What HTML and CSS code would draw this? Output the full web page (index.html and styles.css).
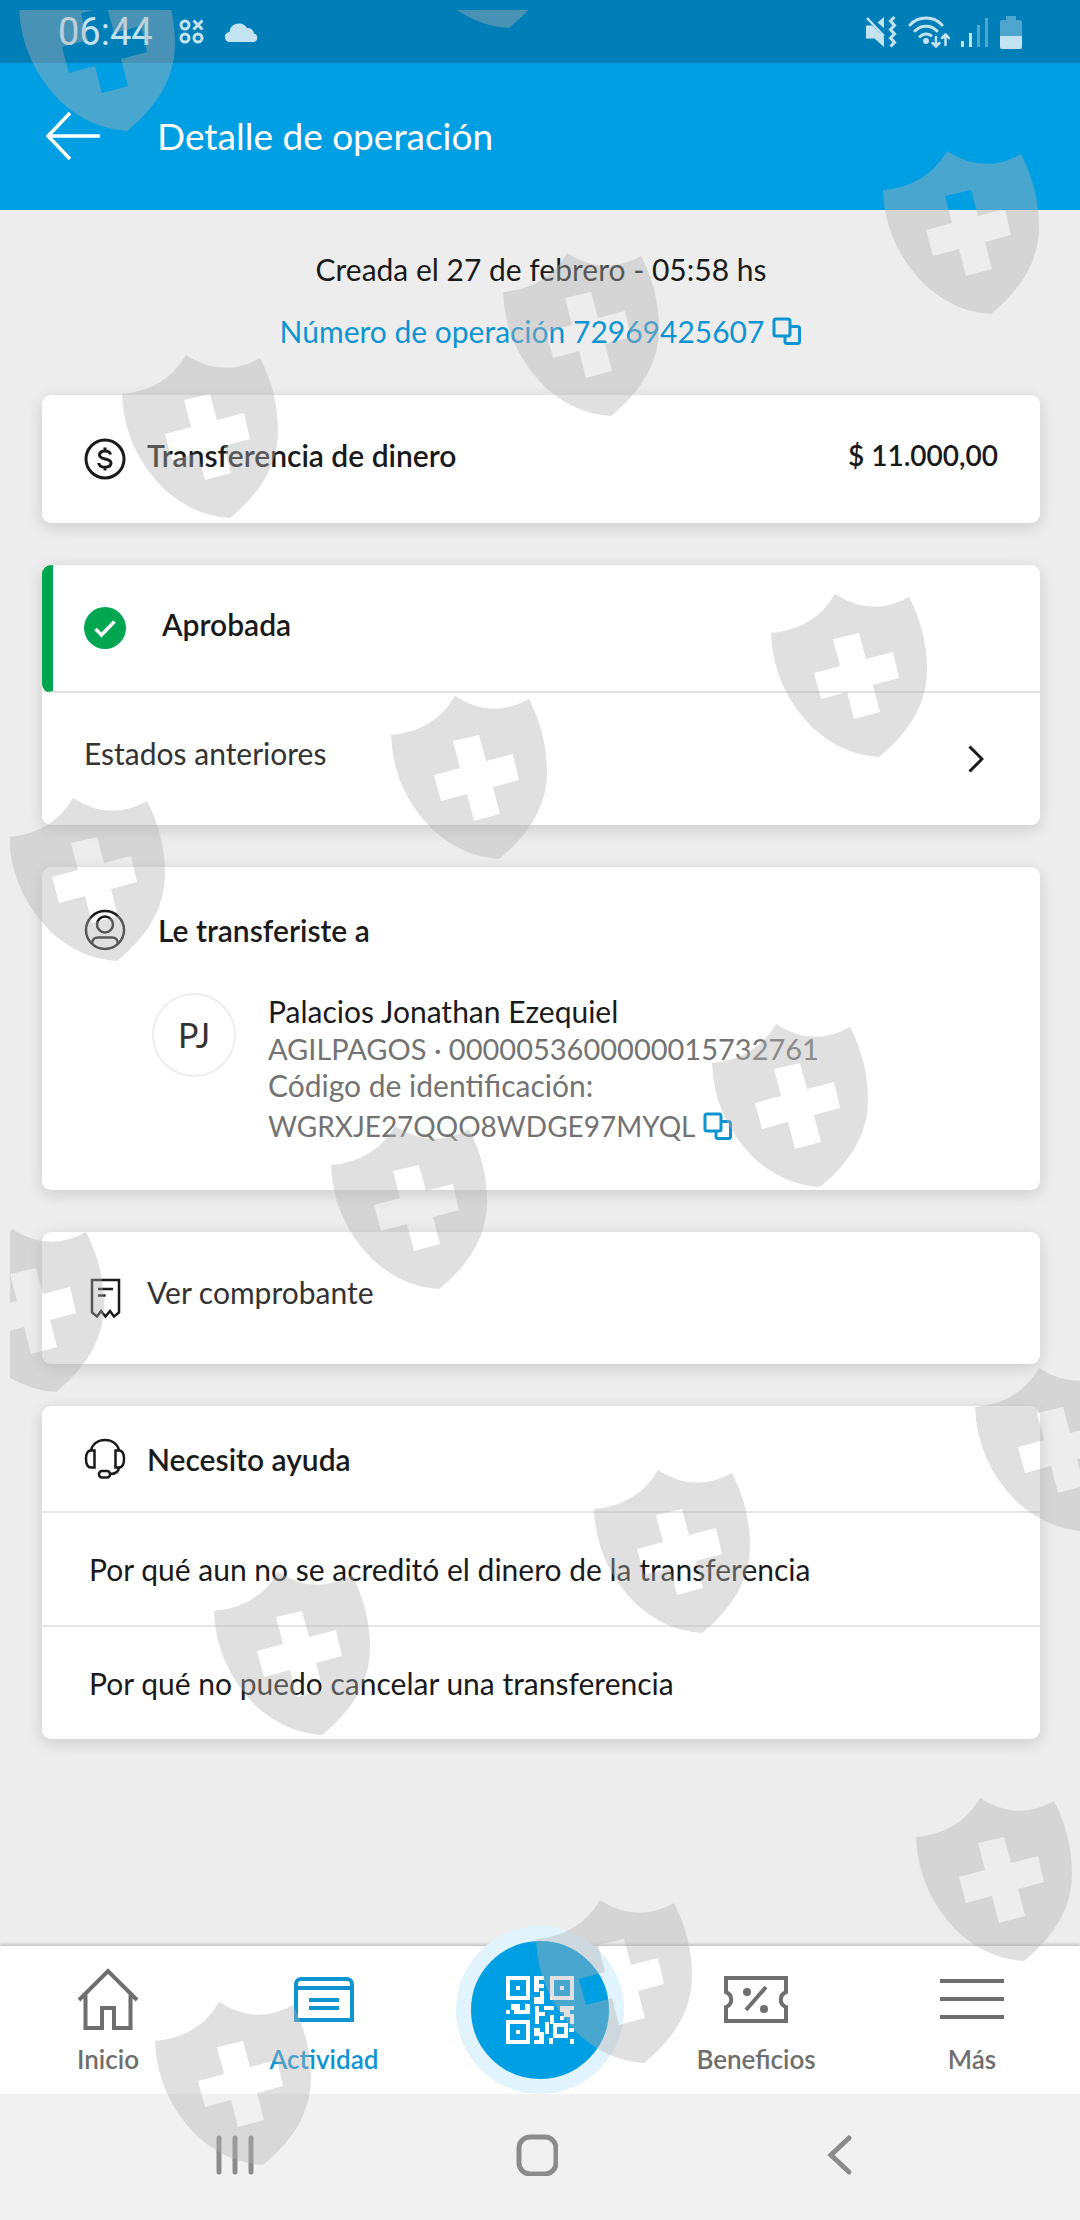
FILE: index.html
```html
<!DOCTYPE html>
<html lang="es">
<head>
    <meta charset="UTF-8">
    <meta name="viewport" content="width=device-width, initial-scale=1.0">
    <title>Detalle de operación</title>
    <link rel="stylesheet" href="styles.css">
</head>
<body>
    <!-- Phone status bar -->
    <div class="status-bar">
        <span class="status-time">06:44</span>
        <svg class="status-apps" width="26" height="26" viewBox="0 0 26 26" fill="none" stroke="currentColor" stroke-width="3">
            <circle cx="6" cy="6" r="4"/>
            <circle cx="6" cy="19" r="4"/>
            <circle cx="19" cy="19" r="4"/>
            <path d="M14.500 1.500l9 9M23.500 1.500l-9 9"/>
        </svg>
        <svg class="status-cloud" width="34" height="20" viewBox="0 0 34 20" fill="currentColor">
            <path d="M5 20a5 5 0 0 1-.5-10A9.500 9.500 0 0 1 22 6a6.500 6.500 0 0 1 7 5.500A4.500 4.500 0 0 1 29.500 20z"/>
        </svg>
        <div class="status-right">
            <svg width="32" height="34" viewBox="0 0 32 34" fill="currentColor">
                <path d="M1 10.500h6L19 22v10L9.500 23.500H1zM12.500 7.500L19 2v11z"/>
                <path d="M2 3l17 18" stroke="currentColor" stroke-width="2.500"/>
                <path d="M29.500 2l-4 4 4 4.500-4 4 4 4.500-4 4 4 4.500-4 4" fill="none" stroke="currentColor" stroke-width="3"/>
            </svg>
            <svg width="42" height="34" viewBox="0 0 42 34" fill="none" stroke="currentColor" stroke-width="3" stroke-linecap="round">
                <path d="M2 10a22 22 0 0 1 32 0M7 16a15 15 0 0 1 22 0M12 21.500a8.500 8.500 0 0 1 11-1"/>
                <circle cx="18" cy="26" r="1.500" fill="currentColor"/>
                <path d="M28 22v9M24.500 28l3.500 3.500 3.500-3.500M37.500 30V20M34 23l3.500-3.500L41 23" stroke-width="2.500"/>
            </svg>
            <svg width="28" height="34" viewBox="0 0 28 34" fill="currentColor">
                <path d="M0 26h3v6H0zM8 18h3v14H8z"/>
                <path d="M16 10h3v22h-3zM24 3h3v29h-3z" opacity=".4"/>
            </svg>
            <svg width="22" height="34" viewBox="0 0 22 34" fill="currentColor">
                <path d="M6 1h10v4h4a2 2 0 0 1 2 2v14H0V7a2 2 0 0 1 2-2h4z" opacity=".4"/>
                <path d="M0 21h22v11a2 2 0 0 1-2 2H2a2 2 0 0 1-2-2z"/>
            </svg>
        </div>
    </div>

    <!-- App header -->
    <header class="header">
        <button class="icon-button" aria-label="Volver">
            <svg width="56" height="50" viewBox="0 0 56 50" fill="none" stroke="currentColor" stroke-width="3.500">
                <path d="M55 25H3M25 2L3 25l22 23"/>
            </svg>
        </button>
        <h1 class="header-title">Detalle de operación</h1>
    </header>

    <main class="content">
        <div class="summary">
            <p>Creada el 27 de febrero - 05:58 hs</p>
            <p class="summary-number">
                Número de operación 72969425607
                <button class="icon-button copy" aria-label="Copiar número de operación">
                    <svg width="30" height="28" viewBox="0 0 30 28" fill="none" stroke="currentColor" stroke-width="3">
                        <rect x="2" y="2" width="16" height="17" rx="2"/>
                        <path d="M18 9.500h7.500a2 2 0 0 1 2 2v13a2 2 0 0 1-2 2H15a2 2 0 0 1-2-2V19"/>
                    </svg>
                </button>
            </p>
        </div>

        <!-- Amount -->
        <section class="card">
            <div class="row">
                <svg class="row-icon" viewBox="0 0 42 42" fill="none" stroke="currentColor" stroke-width="3">
                    <circle cx="21" cy="21" r="19"/>
                    <path d="M26.500 16.500c-.5-2.500-2.500-3.500-5.500-3.500s-5.500 1.200-5.500 4c0 5.500 11.500 2.500 11.500 8 0 2.800-2.500 4.200-6 4.200s-6-1.500-6.200-4.200M21 9.500V13M21 29v3.500"/>
                </svg>
                <h2 class="row-title">Transferencia de dinero</h2>
                <strong class="amount">$ 11.000,00</strong>
            </div>
        </section>

        <!-- Status -->
        <section class="card">
            <div class="row row-status">
                <svg class="row-icon" viewBox="0 0 42 42">
                    <circle cx="21" cy="21" r="21" fill="#00a650"/>
                    <path d="M11.500 22l6 6 13-13.500" fill="none" stroke="#fff" stroke-width="3.500"/>
                </svg>
                <h2 class="row-title">Aprobada</h2>
            </div>
            <a class="row row-link" href="#">
                <span class="row-text">Estados anteriores</span>
                <svg class="chevron" width="16" height="28" viewBox="0 0 16 28" fill="none" stroke="currentColor" stroke-width="3">
                    <path d="M1.500 1.500L14 14 1.500 26.500"/>
                </svg>
            </a>
        </section>

        <!-- Recipient -->
        <section class="card recipient">
            <div class="recipient-header">
                <svg class="row-icon" viewBox="0 0 42 42" fill="none" stroke="currentColor" stroke-width="2.500">
                    <circle cx="21" cy="21" r="19"/>
                    <circle cx="21" cy="15.500" r="8"/>
                    <path d="M8 34.500c.5-4.500 2-6 6-6h14c4 0 5.500 1.500 6 6"/>
                </svg>
                <h2>Le transferiste a</h2>
            </div>
            <div class="recipient-body">
                <div class="avatar">PJ</div>
                <div class="recipient-data">
                    <p class="recipient-name">Palacios Jonathan Ezequiel</p>
                    <p class="recipient-account">AGILPAGOS · 0000053600000015732761</p>
                    <p>Código de identificación:</p>
                    <p class="recipient-code">
                        WGRXJE27QQO8WDGE97MYQL
                        <button class="icon-button copy" aria-label="Copiar código">
                            <svg width="30" height="28" viewBox="0 0 30 28" fill="none" stroke="currentColor" stroke-width="3">
                                <rect x="2" y="2" width="16" height="17" rx="2"/>
                                <path d="M18 9.500h7.500a2 2 0 0 1 2 2v13a2 2 0 0 1-2 2H15a2 2 0 0 1-2-2V19"/>
                            </svg>
                        </button>
                    </p>
                </div>
            </div>
        </section>

        <!-- Receipt -->
        <section class="card">
            <a class="row row-link" href="#">
                <svg class="row-icon" viewBox="0 0 42 42" fill="none" stroke="currentColor" stroke-width="2.500">
                    <path d="M8 35.500V3h27v32.500l-5 4-4-5.500-4.500 5.500L17 34l-4 5.500z"/>
                    <path d="M14 12h15M14 18.500h7.500"/>
                </svg>
                <span class="row-text">Ver comprobante</span>
            </a>
        </section>

        <!-- Help -->
        <section class="card help">
            <div class="help-header">
                <svg class="row-icon" viewBox="0 0 42 42" fill="none" stroke="currentColor" stroke-width="2.500">
                    <path d="M7 12.500C8.500 6 14 2 21 2s12.500 4 14 10.500"/>
                    <path d="M10.500 12.500H7c-3 0-5 3-5 8.500s2 8.500 5 8.500h3.500zM31.500 12.500H35c3 0 5 3 5 8.500s-2 8.500-5 8.500h-3.500z"/>
                    <path d="M35 29.500c-.5 4.500-3.500 6.500-9 6.500"/>
                    <rect x="15" y="33" width="11" height="6.500" rx="3"/>
                </svg>
                <h2>Necesito ayuda</h2>
            </div>
            <a class="help-link" href="#">Por qué aun no se acreditó el dinero de la transferencia</a>
            <a class="help-link" href="#">Por qué no puedo cancelar una transferencia</a>
        </section>
    </main>

    <!-- App navigation -->
    <nav class="tabs">
        <a class="tab" href="#">
            <svg width="64" height="64" viewBox="0 0 64 64" fill="none" stroke="currentColor" stroke-width="4">
                <path d="M3 33L32 4l29 29"/>
                <path d="M9.500 28v33H26V41h12v20h16.500V28"/>
            </svg>
            <span>Inicio</span>
        </a>
        <a class="tab tab-active" href="#">
            <svg width="64" height="64" viewBox="0 0 64 64" fill="none" stroke="currentColor" stroke-width="4">
                <path d="M4 53V17a5 5 0 0 1 5-5h46a5 5 0 0 1 5 5v36z"/>
                <path d="M4 21h56M17 33h30M17 41h30"/>
            </svg>
            <span>Actividad</span>
        </a>
        <div class="tab-center">
            <button class="qr-button" aria-label="Escanear código QR">
                <svg width="68" height="68" viewBox="0 0 68 68" fill="currentColor">
                    <path fill-rule="evenodd" d="M0 0h24v24H0zM4 4v16h16V4zM10 10h4v4h-4zM44 0h24v24H44zM48 4v16h16V4zM54 10h4v4h-4zM0 44h24v24H0zM4 48v16h16V48zM10 54h4v4h-4z"/>
                    <path d="M28 0h10v4h-5v4h5v4h-5v4h-5zM34 15h4v13H28v-7h6z"/>
                    <path d="M5 28h9v6h5v-6h5v10H8v-4H5zM0 34h4v4H0z"/>
                    <path d="M29 30h4v6h6v4h-6v8h-4zM38 30h10v4H38zM54 30h14v4h-4v4h4v10h-4v-7h-6v-5h-4z"/>
                    <path d="M28 52h6v4h4v12H28v-4h5v-4h-5zM39 46h4v12h-4zM44 39h4v9h-4zM43 62h4v6h-4zM63 52h5v4h-5zM64 63h4v5h-4zM54 40h4v4h-4z"/>
                    <path fill-rule="evenodd" d="M47 47h15v15H47zM51 51v7h7v-7z"/>
                </svg>
            </button>
        </div>
        <a class="tab" href="#">
            <svg width="64" height="64" viewBox="0 0 64 64" fill="none" stroke="currentColor" stroke-width="4">
                <path d="M2 11h60v14a8 8 0 0 0 0 15v14H2V40a8 8 0 0 0 0-15z"/>
                <path d="M22 43l20-23"/>
                <circle cx="23" cy="25" r="4" fill="currentColor" stroke="none"/>
                <circle cx="40" cy="42" r="4" fill="currentColor" stroke="none"/>
            </svg>
            <span>Beneficios</span>
        </a>
        <a class="tab" href="#">
            <svg width="64" height="64" viewBox="0 0 64 64" fill="none" stroke="currentColor" stroke-width="4">
                <path d="M0 14h64M0 32h64M0 50h64"/>
            </svg>
            <span>Más</span>
        </a>
    </nav>

    <!-- System navigation -->
    <div class="system-bar">
        <button class="icon-button" aria-label="Recientes">
            <svg width="42" height="42" viewBox="0 0 42 42" fill="none" stroke="currentColor" stroke-width="5" stroke-linecap="round">
                <path d="M5 4v34M21 4v34M37 4v34"/>
            </svg>
        </button>
        <button class="icon-button" aria-label="Inicio del teléfono">
            <svg width="42" height="42" viewBox="0 0 42 42" fill="none" stroke="currentColor" stroke-width="5">
                <rect x="3" y="3" width="37" height="37" rx="11"/>
            </svg>
        </button>
        <button class="icon-button" aria-label="Atrás">
            <svg width="42" height="42" viewBox="0 0 42 42" fill="none" stroke="currentColor" stroke-width="5" stroke-linecap="round">
                <path d="M31 4L13 21l18 17"/>
            </svg>
        </button>
    </div>

    <!-- Shield pattern over the whole screen -->
    <svg class="shields" viewBox="0 0 1080 2220" preserveAspectRatio="xMidYMin slice" aria-hidden="true">
        <defs>
            <path id="shield" fill-rule="evenodd" d="M0 39Q44 35 64 0Q101 24 138 3Q156 38 156 76Q156 124 108 163Q72 161 42 134Q2 94 0 39zM62 45L69 72L43 79L50 105L76 98L83 125L109 118L102 91L128 84L122 58L95 65L88 39z"/>
            <clipPath id="edge"><rect x="10" y="10" width="1070" height="2210"/></clipPath>
        </defs>
        <g clip-path="url(#edge)">
            <use href="#shield" x="19" y="-32"/>
            <use href="#shield" x="401" y="-135"/>
            <use href="#shield" x="883" y="151"/>
            <use href="#shield" x="503" y="253"/>
            <use href="#shield" x="122" y="355"/>
            <use href="#shield" x="771" y="594"/>
            <use href="#shield" x="391" y="696"/>
            <use href="#shield" x="9" y="798"/>
            <use href="#shield" x="712" y="1024"/>
            <use href="#shield" x="331" y="1126"/>
            <use href="#shield" x="-52" y="1229"/>
            <use href="#shield" x="975" y="1368"/>
            <use href="#shield" x="594" y="1470"/>
            <use href="#shield" x="214" y="1572"/>
            <use href="#shield" x="916" y="1798"/>
            <use href="#shield" x="536" y="1900"/>
            <use href="#shield" x="155" y="2002"/>
        </g>
    </svg>
</body>
</html>
```

FILE: styles.css
```css
/* General styles */
* {
    box-sizing: border-box;
}

body {
    position: relative;
    margin: 0;
    min-height: 100vh;
    display: flex;
    flex-direction: column;
    background-color: #ededed;
    color: #1a1a1a;
    font-family: Lato, "Open Sans", sans-serif;
    font-size: 30px;
    line-height: 38px;
}

h1, h2, p {
    margin: 0;
    font-size: inherit;
}

h2 {
    font-weight: 600;
}

a {
    color: inherit;
    text-decoration: none;
}

svg {
    display: block;
    flex: none;
}

.icon-button {
    padding: 0;
    border: none;
    background: none;
    color: inherit;
    cursor: pointer;
}

/* Phone status bar */
.status-bar {
    display: flex;
    align-items: center;
    height: 63px;
    padding: 0 58px;
    background-color: #007eb7;
    color: #c4e3f1;
}

.status-time {
    font-family: Roboto, sans-serif;
    font-size: 38px;
}

.status-apps {
    margin-left: 26px;
}

.status-cloud {
    margin-left: 20px;
}

.status-right {
    display: flex;
    gap: 11px;
    margin-left: auto;
}

/* App header */
.header {
    display: flex;
    align-items: center;
    gap: 56px;
    height: 147px;
    padding: 0 46px 2px 45px;
    background-color: #009ee3;
    color: #fff;
}

.header-title {
    font-size: 37px;
    font-weight: 400;
    line-height: 44px;
}

/* Main column */
.content {
    flex: 1;
    display: flex;
    flex-direction: column;
    gap: 42px;
    padding: 40px 40px 42px 42px;
}

.summary {
    display: flex;
    flex-direction: column;
    align-items: center;
    gap: 24px;
    padding-bottom: 3px;
}

.summary-number,
.recipient-code {
    display: flex;
    align-items: center;
    gap: 8px;
}

.summary-number,
.copy {
    color: #0f94d2;
}

/* Cards */
.card {
    border-radius: 9px;
    background-color: #fff;
    box-shadow: 0 4px 16px rgba(0, 0, 0, 0.14);
}

.row {
    display: flex;
    align-items: center;
    min-height: 128px;
    padding: 0 42px;
}

.row-icon {
    width: 42px;
    height: 42px;
}

.row-title,
.row-text,
.amount {
    padding-bottom: 8px;
}

.row-icon + .row-title,
.row-icon + .row-text {
    margin-left: 21px;
}

.row-text {
    padding-bottom: 12px;
    color: #333;
}

.amount {
    margin-left: auto;
    font-size: 28px;
    font-weight: 600;
}

/* Operation status */
.row-status {
    padding-left: 31px;
    border-left: 11px solid #00a650;
    border-bottom: 2px solid #e1e1e1;
    border-radius: 9px 0 0 9px;
}

.row-status .row-icon + .row-title {
    margin-left: 36px;
}

.row-link {
    min-height: 132px;
}

.chevron {
    margin-left: auto;
    margin-right: 14px;
}

/* Recipient */
.recipient {
    padding: 42px;
}

.recipient-header {
    display: flex;
    align-items: center;
    gap: 32px;
}

.recipient-body {
    display: flex;
    gap: 32px;
    margin-top: 42px;
    padding-left: 68px;
}

.avatar {
    display: flex;
    flex: none;
    align-items: center;
    justify-content: center;
    width: 84px;
    height: 84px;
    border: 2px solid #eee;
    border-radius: 50%;
    color: #333;
    font-size: 34px;
}

.recipient-data {
    color: #737373;
    line-height: 37px;
}

.recipient-name {
    color: #1a1a1a;
}

.recipient-account {
    font-size: 29px;
}

.recipient-code {
    height: 44px;
    font-size: 28px;
}

/* Help */
.help-header {
    display: flex;
    align-items: center;
    gap: 21px;
    padding: 32px 42px 31px;
}

.help-link {
    display: block;
    padding: 37px 47px;
    border-top: 2px solid #e6e6e6;
}

/* App navigation */
.tabs {
    display: flex;
    align-items: flex-end;
    height: 148px;
    background-color: #fff;
    box-shadow: 0 -1px 4px rgba(0, 0, 0, 0.25);
    color: #6f6f6f;
    font-size: 26px;
    font-weight: 600;
    line-height: 32px;
}

.tab {
    flex: 1;
    display: flex;
    flex-direction: column;
    align-items: center;
    gap: 12px;
    height: 100%;
    padding-top: 21px;
}

.tab-active {
    color: #0f94d2;
}

.tab-center {
    flex: 1;
    display: flex;
    justify-content: center;
}

.qr-button {
    display: flex;
    flex: none;
    align-items: center;
    justify-content: center;
    width: 168px;
    height: 168px;
    padding: 0;
    border: 15px solid #e1f4fd;
    border-radius: 50%;
    background-color: #009ee3;
    color: #fff;
    cursor: pointer;
}

/* System navigation */
.system-bar {
    display: flex;
    justify-content: center;
    gap: 260px;
    height: 126px;
    padding: 20px 6px 24px 0;
    background-color: #f1f1f1;
    color: #8b8b8b;
}

/* Shield pattern */
.shields {
    position: absolute;
    top: 0;
    left: 0;
    width: 100%;
    height: 100%;
    fill: #b3b3b3;
    opacity: 0.4;
    pointer-events: none;
}
```
